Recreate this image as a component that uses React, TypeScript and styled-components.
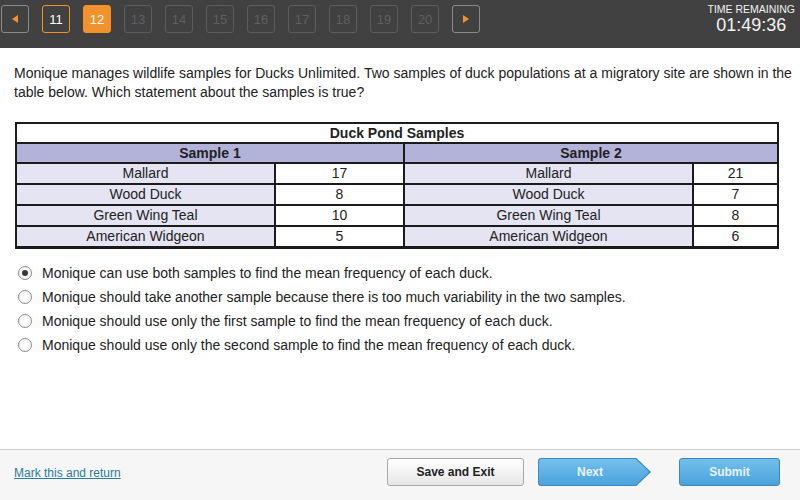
import styled, { createGlobalStyle } from "styled-components";

const GlobalStyle = createGlobalStyle`
  html, body {
    margin: 0;
    padding: 0;
    background: #ffffff;
  }
  body {
    font-family: "Liberation Sans", Arial, sans-serif;
    color: #222;
  }
`;

const Page = styled.div`
  width: 800px;
  height: 500px;
  display: flex;
  flex-direction: column;
  overflow: hidden;
`;

const TopBar = styled.div`
  height: 48px;
  background: #414141;
  display: flex;
  align-items: flex-start;
  justify-content: space-between;
  padding: 5px 5px 0 1px;
  box-sizing: border-box;
`;

const Pager = styled.div`
  display: flex;
  gap: 13px;
`;

const PageBox = styled.div<{ $state: "done" | "current" | "todo" | "arrow" }>`
  width: 28px;
  height: 28px;
  box-sizing: border-box;
  border-radius: 3px;
  display: flex;
  align-items: center;
  justify-content: center;
  font-size: 13px;
  border: 1px solid
    ${(p) =>
      p.$state === "done" || p.$state === "current"
        ? "#f3922a"
        : p.$state === "arrow"
        ? "#8a8a8a"
        : "#5c5c5c"};
  background: ${(p) => (p.$state === "current" ? "#f3922a" : "transparent")};
  color: ${(p) => (p.$state === "todo" ? "#5f5f5f" : "#ffffff")};
`;

const Timer = styled.div`
  display: flex;
  flex-direction: column;
  align-items: center;
  color: #f2f2f2;
  margin-top: -2px;
`;

const TimerLabel = styled.div`
  font-size: 10.5px;
  line-height: 12px;
`;

const TimerValue = styled.div`
  font-size: 18px;
  line-height: 20px;
`;

const Content = styled.div`
  flex: 1;
  padding: 16px 0 0 14px;
`;

const Question = styled.p`
  margin: 0;
  font-size: 14px;
  line-height: 19px;
  color: #222;
`;

const Table = styled.table`
  margin-top: 20px;
  margin-left: 1px;
  width: 762px;
  border-collapse: collapse;
  border: 2px solid #1b1b1b;
  border-bottom-width: 3px;
  font-size: 14px;
  table-layout: fixed;
`;

const Caption = styled.th`
  height: 18px;
  padding: 0;
  font-weight: bold;
  background: #ffffff;
  border: 2px solid #1b1b1b;
  line-height: 16px;
`;

const SampleHead = styled.th`
  height: 18px;
  padding: 0;
  font-weight: bold;
  background: #b3b3da;
  border: 2px solid #1b1b1b;
  line-height: 16px;
`;

const Cell = styled.td<{ $name?: boolean }>`
  height: 19px;
  padding: 0;
  text-align: center;
  background: ${(p) => (p.$name ? "#e4e4f2" : "#ffffff")};
  border: 2px solid #1b1b1b;
  line-height: 17px;
  color: #222;
`;

const Options = styled.div`
  margin-top: 12px;
  display: flex;
  flex-direction: column;
`;

const Option = styled.label`
  display: flex;
  align-items: center;
  height: 24px;
  font-size: 14px;
  color: #222;
`;

const Radio = styled.span<{ $checked?: boolean }>`
  width: 12px;
  height: 12px;
  margin-left: 4px;
  margin-right: 10px;
  border-radius: 50%;
  border: 1px solid #8e8e8e;
  background: radial-gradient(circle, #ffffff 0%, #eeeeee 100%);
  display: flex;
  align-items: center;
  justify-content: center;
  box-sizing: content-box;

  &::after {
    content: "";
    width: 6px;
    height: 6px;
    border-radius: 50%;
    background: ${(p) => (p.$checked ? "#3a3a3a" : "transparent")};
  }
`;

const Footer = styled.div`
  height: 51px;
  border-top: 1px solid #cfcfcf;
  background: #f6f6f6;
  display: flex;
  align-items: flex-start;
  padding: 8px 20px 0 14px;
  box-sizing: border-box;
`;

const MarkLink = styled.a`
  font-size: 12px;
  line-height: 14px;
  color: #2b7d99;
  text-decoration: underline;
  margin-top: 8px;
`;

const Actions = styled.div`
  margin-left: auto;
  display: flex;
  align-items: center;
`;

const SaveButton = styled.button`
  width: 137px;
  height: 28px;
  border: 1px solid #a9a9a9;
  border-radius: 3px;
  background: linear-gradient(#ffffff, #e6e6e6);
  font-family: "Liberation Sans", Arial, sans-serif;
  font-weight: bold;
  font-size: 12px;
  color: #222;
`;

const NextOuter = styled.div`
  margin-left: 14px;
  width: 113px;
  height: 28px;
  padding: 1px;
  box-sizing: border-box;
  background: #3d88bd;
  clip-path: polygon(0 0, 87% 0, 100% 50%, 87% 100%, 0 100%);
  border-radius: 3px 0 0 3px;
`;

const NextInner = styled.div`
  height: 100%;
  background: linear-gradient(#74c1ec, #4aa2dc);
  clip-path: polygon(0 0, 87% 0, 99.4% 50%, 87% 100%, 0 100%);
  border-radius: 2px 0 0 2px;
  display: flex;
  align-items: center;
  padding-left: 38px;
  font-size: 12px;
  font-weight: bold;
  color: #e6f3fb;
`;

const SubmitButton = styled.button`
  margin-left: 28px;
  width: 101px;
  height: 28px;
  border: 1px solid #3d88bd;
  border-radius: 3px;
  background: linear-gradient(#72c0eb, #4aa2dc);
  font-family: "Liberation Sans", Arial, sans-serif;
  font-weight: bold;
  font-size: 12px;
  color: #e6f3fb;
`;

const Arrow = ({ dir }: { dir: "left" | "right" }) => (
  <svg width="8" height="10" viewBox="0 0 8 10">
    {dir === "left" ? (
      <polygon points="7,1 1,5 7,9" fill="#f3922a" />
    ) : (
      <polygon points="1,1 7,5 1,9" fill="#f3922a" />
    )}
  </svg>
);

const rows1 = [
  ["Mallard", "17"],
  ["Wood Duck", "8"],
  ["Green Wing Teal", "10"],
  ["American Widgeon", "5"],
];
const rows2 = [
  ["Mallard", "21"],
  ["Wood Duck", "7"],
  ["Green Wing Teal", "8"],
  ["American Widgeon", "6"],
];

const answers = [
  "Monique can use both samples to find the mean frequency of each duck.",
  "Monique should take another sample because there is too much variability in the two samples.",
  "Monique should use only the first sample to find the mean frequency of each duck.",
  "Monique should use only the second sample to find the mean frequency of each duck.",
];

const pages = [11, 12, 13, 14, 15, 16, 17, 18, 19, 20];

export default function App() {
  return (
    <Page>
      <GlobalStyle />
      <TopBar>
        <Pager>
          <PageBox $state="arrow">
            <Arrow dir="left" />
          </PageBox>
          {pages.map((n) => (
            <PageBox
              key={n}
              $state={n === 11 ? "done" : n === 12 ? "current" : "todo"}
            >
              {n}
            </PageBox>
          ))}
          <PageBox $state="arrow">
            <Arrow dir="right" />
          </PageBox>
        </Pager>
        <Timer>
          <TimerLabel>TIME REMAINING</TimerLabel>
          <TimerValue>01:49:36</TimerValue>
        </Timer>
      </TopBar>

      <Content>
        <Question>
          Monique manages wildlife samples for Ducks Unlimited. Two samples of
          duck populations at a migratory site are shown in the table below.
          Which statement about the samples is true?
        </Question>

        <Table>
          <colgroup>
            <col style={{ width: 259 }} />
            <col style={{ width: 129 }} />
            <col style={{ width: 289 }} />
            <col style={{ width: 85 }} />
          </colgroup>
          <thead>
            <tr>
              <Caption colSpan={4}>Duck Pond Samples</Caption>
            </tr>
            <tr>
              <SampleHead colSpan={2}>Sample 1</SampleHead>
              <SampleHead colSpan={2}>Sample 2</SampleHead>
            </tr>
          </thead>
          <tbody>
            {rows1.map((r, i) => (
              <tr key={r[0]}>
                <Cell $name>{r[0]}</Cell>
                <Cell>{r[1]}</Cell>
                <Cell $name>{rows2[i][0]}</Cell>
                <Cell>{rows2[i][1]}</Cell>
              </tr>
            ))}
          </tbody>
        </Table>

        <Options>
          {answers.map((a, i) => (
            <Option key={i}>
              <Radio $checked={i === 0} />
              {a}
            </Option>
          ))}
        </Options>
      </Content>

      <Footer>
        <MarkLink>Mark this and return</MarkLink>
        <Actions>
          <SaveButton>Save and Exit</SaveButton>
          <NextOuter>
            <NextInner>Next</NextInner>
          </NextOuter>
          <SubmitButton>Submit</SubmitButton>
        </Actions>
      </Footer>
    </Page>
  );
}
